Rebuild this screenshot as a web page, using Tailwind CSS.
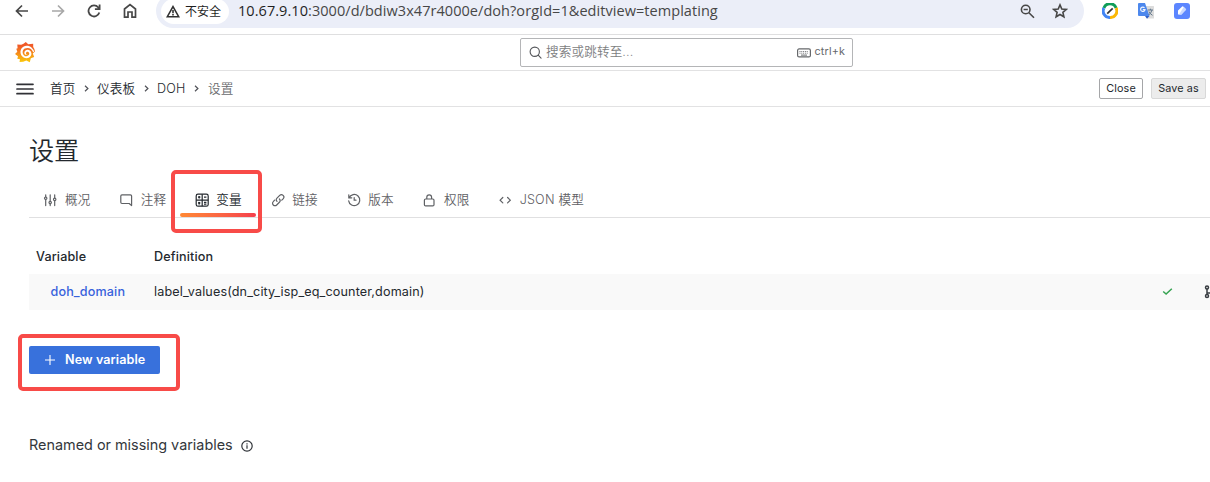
<!DOCTYPE html>
<html lang="zh">
<head>
<meta charset="utf-8">
<title>设置 - DOH - Grafana</title>
<script src="https://cdn.jsdelivr.net/npm/@tailwindcss/browser@4"></script>
</head>
<body class="w-[1210px] h-[482px] overflow-hidden bg-white text-[#24292e] text-[12.6px] font-['Inter','Noto_Sans_CJK_SC',sans-serif] tracking-[0.135px]">
<!-- browser toolbar -->
<div class="h-[35px] border-b border-[#dfdfe0] flex items-start">
  <div class="w-[156px] h-[22px] pl-[15px] flex items-center gap-[22px] text-[#474747]">
    <svg class="w-[14px] h-[14px] shrink-0" viewBox="0 0 14 14" fill="none" stroke="currentColor" stroke-width="1.7"><path d="M13 7H2M7 1.5L1.5 7L7 12.5"/></svg>
    <svg class="w-[14px] h-[14px] shrink-0 text-[#a8a8a8]" viewBox="0 0 14 14" fill="none" stroke="currentColor" stroke-width="1.7"><path d="M1 7h11M7 1.5L12.500 7L7 12.500"/></svg>
    <svg class="w-[14px] h-[14px] shrink-0" viewBox="0 0 14 14" fill="none" stroke="currentColor" stroke-width="1.8"><path d="M12.300 8.500A5.500 5.500 0 1 1 11.300 3.500L12.300 4.800M12.600 .5V5.200H7.900"/></svg>
    <svg class="w-[14px] h-[16px] shrink-0" viewBox="0 0 14 16" fill="none" stroke="currentColor" stroke-width="1.7"><path d="M1.500 14.200V6L7 1.700L12.500 6V14.200H9V9H5V14.200Z"/></svg>
  </div>
  <div class="w-[928px] h-[34px] -mt-[6px] rounded-full bg-[#ebeef8] flex items-center pl-[5px] pr-4">
    <div class="w-[68px] h-[25px] rounded-full bg-white flex items-center pl-[5px] gap-[5px] text-[12px] tracking-normal text-[#1f1f1f] shrink-0">
      <svg class="w-[14px] h-[13px] shrink-0" viewBox="0 0 14 13" fill="none" stroke="#303030" stroke-width="1.6"><path d="M7 1.600L12.700 11.700H1.300ZM7 5v3.200M7 9.100v1.400"/></svg>
      <span class="whitespace-nowrap pt-px">不安全</span>
    </div>
    <div class="ml-[9px] flex-1 whitespace-nowrap font-['Open_Sans','Noto_Sans',sans-serif] text-[14.5px] tracking-[0.055px] text-[#474747]"><span class="text-[#1f1f1f]">10.67.9.10</span>:3000/d/bdiw3x47r4000e/doh?orgId=1&amp;editview=templating</div>
    <svg class="w-[15px] h-[15px] mr-[17px]" viewBox="0 0 15 15" fill="none" stroke="#474747" stroke-width="1.600"><circle cx="5.700" cy="5.500" r="4.300"/><path d="M8.900 8.700L14 13.800M3.600 5.500h4.200"/></svg>
    <svg class="w-[16px] h-[16px]" viewBox="0 0 16 16" fill="none" stroke="#474747" stroke-width="1.600"><path d="M8 1.900L9.800 6L14.300 6.400L10.900 9.400L11.900 13.800L8 11.500L4.100 13.800L5.100 9.400L1.700 6.400L6.200 6Z"/></svg>
  </div>
  <div class="h-[22px] pl-[18px] flex items-center gap-[20px]">
    <svg class="w-4 h-4" viewBox="0 0 16 16" fill="none"><g stroke-width="3"><path stroke="#0f9d58" d="M1.900 5A6.500 6.500 0 0 1 14.100 5"/><path stroke="#fbb804" d="M14.100 5A6.500 6.500 0 0 1 8 14.500"/><path stroke="#4285f4" d="M8 14.500A6.500 6.500 0 0 1 1.900 5"/></g><path stroke="#333" stroke-width="1.700" d="M5.200 10.600L10.700 5.300"/></svg>
    <svg class="w-4 h-4" viewBox="0 0 16 16"><path fill="#dcdcdc" d="M6 3h9.500q.5 0 .5.500V15.500H9Z"/><path fill="#4d88ed" d="M1 0H7L11.500 13H1Q0 13 0 12V1Q0 0 1 0Z"/><path fill="#2f5fc7" d="M7 13h4.500L9 15.800Z"/><path fill="none" stroke="#eef4ff" stroke-width="1.200" d="M6.500 4.800A2.200 2.200 0 1 0 7 6.600H4.800"/><path fill="none" stroke="#60758a" d="M9.800 7H15M12.400 5.700V7M14 7Q13.200 10 10.700 12M11 8.500Q12 11 14.500 12.300"/></svg>
    <svg class="w-4 h-4" viewBox="0 0 16 16"><rect width="16" height="16" rx="3" fill="#5c86ff"/><path fill="#fff" d="M4 7.600L8.200 3.500Q8.700 3 9.200 3.500L11.800 6L7.500 11.500H4.500Q4 11.500 4 11Z"/><path fill="#cbd9ff" d="M9.700 4L12 6.200Q12.400 6.600 12 7L7.500 11.500H5Z"/></svg>
  </div>
</div>

<!-- application header -->
<header class="h-[36px] border-b border-[#e2e2e3] flex items-center pl-[15px]">
  <svg class="w-[20px] h-[21px] shrink-0" viewBox="0 0 20 21"><defs><linearGradient id="flame" x1="0" y1="0" x2="0" y2="1"><stop offset=".2" stop-color="#f05a28"/><stop offset="1" stop-color="#fbca0a"/></linearGradient></defs><path fill="url(#flame)" d="M10.800 0L13.200 2.200L18.200 1.800L18.200 5Q19.800 7 20 9.500L17.800 11.500L19.200 15L15.800 16.200L14.800 20.300L11.300 18.600L8.200 19.800L4.500 20L5 17.300L2.300 16.800L3 14.200L0 12L2.300 9.800L1.300 6.800L2.600 6.200L2.300 2.500L6.200 2.700L8.500 1.800Z"/><path fill="#fff" d="M19.200 9.500C17.500 5.200 14.500 3.600 11.500 3.700C7.400 4 5.300 7.200 5.500 10.500C5.700 13.800 8.500 16.300 11.600 16.200C14.900 16 16.700 13.500 16.400 11.200C16.100 9 14.300 7.500 12.300 7.700C10.300 7.900 9.100 9.600 9.400 11.300C9.700 12.700 11.200 13.400 12.500 12.700C11.300 12.800 10.900 12 11 11.200C11.200 9.900 12.300 9.500 13.200 9.900C14.400 10.400 14.600 11.900 13.800 13C12.500 14.600 9.900 14.500 8.600 12.900C7 10.900 7.500 7.800 9.800 6.600C12.700 5 16.800 6 18.200 10.200Z"/></svg>
  <div class="ml-[485px] w-[333px] h-[29px] border border-[#b4b5b7] rounded-[2px] flex items-center pl-[8px] pr-[7px] text-[#7d7e81]">
    <svg class="w-[13px] h-[13px] shrink-0" viewBox="0 0 14 14" fill="none" stroke="#55575b" stroke-width="1.200"><circle cx="6.200" cy="6.200" r="5"/><path d="M9.900 9.900L13 13" stroke-linecap="round"/></svg>
    <span class="ml-[4px] flex-1 font-[350]">搜索或跳转至...</span>
    <svg class="w-[14px] h-[10px] mr-[4px]" viewBox="0 0 14 10" fill="none" stroke="#66686b"><rect x=".6" y=".9" width="12.800" height="8" rx="1.500" stroke-width="1.200"/><path d="M2.500 3.500h9M2.500 5.200h9" stroke-dasharray="1 .8" stroke-width=".9"/><path d="M4 7.100h6"/></svg>
    <span class="text-[10.8px] text-[#66686b]">ctrl+k</span>
  </div>
</header>
<nav class="h-[36px] border-b border-[#e2e2e3] flex items-center pl-[16px] pr-[4px]">
  <svg class="w-[18px] h-[12px] shrink-0" viewBox="0 0 18 12" stroke="#303136" stroke-width="1.700" stroke-linecap="round"><path d="M1 1.300h16M1 6h16M1 10.700h16"/></svg>
  <div class="ml-[16px] pt-px flex items-center whitespace-nowrap font-[350]">
    <span class="w-[26px]">首页</span>
    <svg class="w-[5px] h-[7px] ml-[8px] mr-[8px]" viewBox="0 0 5 7" fill="none" stroke="#505258" stroke-width="1.200"><path d="M1 .8L3.900 3.500L1 6.200"/></svg>
    <span class="w-[39px]">仪表板</span>
    <svg class="w-[5px] h-[7px] ml-[8px] mr-[8px]" viewBox="0 0 5 7" fill="none" stroke="#505258" stroke-width="1.200"><path d="M1 .8L3.900 3.500L1 6.200"/></svg>
    <span class="w-[29px]">DOH</span>
    <svg class="w-[5px] h-[7px] ml-[8px] mr-[9px]" viewBox="0 0 5 7" fill="none" stroke="#505258" stroke-width="1.200"><path d="M1 .8L3.900 3.500L1 6.200"/></svg>
    <span class="text-[#696b6e]">设置</span>
  </div>
  <div class="ml-auto flex gap-[8px] text-[10.8px]">
    <button class="w-[44px] h-[21px] pt-px border border-[#a5a6a8] rounded-[2px] whitespace-nowrap">Close</button>
    <button class="w-[55px] h-[21px] pt-px border border-[#d8d8d8] bg-[#ececec] rounded-[2px] whitespace-nowrap">Save as</button>
  </div>
</nav>

<main class="pl-[29px]">
  <h1 class="pt-[25px] h-[75px] text-[25.2px] leading-[38px] tracking-[-0.2px] font-[350]">设置</h1>
  <!-- settings tabs -->
  <div class="relative h-[36px] border-b border-[#e0e0e1] flex text-[#5f6165] font-[350]">
    <div class="w-[75.7px] h-[36px] pl-[14.4px] flex items-center gap-[7.2px] whitespace-nowrap"><svg class="w-[14.4px] h-[14.4px] shrink-0" viewBox="0 0 24 24" fill="none" stroke="currentColor" stroke-width="2" stroke-linecap="round"><path d="M4.500 3v3.500M4.500 11v10M12 3v10M12 18v3M19.500 3v5.500M19.500 13v8"/><circle cx="4.500" cy="8.700" r="2"/><circle cx="12" cy="16" r="2"/><circle cx="19.500" cy="10.700" r="2"/></svg><span>概况</span></div>
    <div class="w-[75.700px] h-[36px] pl-[14.4px] flex items-center gap-[7.2px] whitespace-nowrap"><svg class="w-[14.4px] h-[14.4px] shrink-0" viewBox="0 0 24 24" fill="none" stroke="currentColor" stroke-width="2" stroke-linejoin="round"><path d="M5 3h14a2 2 0 0 1 2 2v16l-4-3.500H5a2 2 0 0 1-2-2V5a2 2 0 0 1 2-2Z"/></svg><span>注释</span></div>
    <div class="w-[76px] h-[36px] pl-[14.4px] flex items-center gap-[7.2px] whitespace-nowrap text-[#24292e]"><svg class="w-[14.4px] h-[14.4px] shrink-0" viewBox="0 0 24 24" fill="none" stroke="currentColor" stroke-width="2"><rect x="2" y="2" width="20" height="20" rx="3"/><path d="M12 2v20M2 12h20M5 7h4M7 5v4M15 7h4M5.500 15.500l3 3M8.500 15.500l-3 3M15 15.500h4M15 18.500h4"/></svg><span>变量</span></div>
    <div class="w-[76px] h-[36px] pl-[14.4px] flex items-center gap-[7.2px] whitespace-nowrap"><svg class="w-[14.4px] h-[14.4px] shrink-0" viewBox="0 0 24 24" fill="none" stroke="currentColor" stroke-width="2" stroke-linecap="round"><path d="M10 14a4 4 0 0 1 0-5.500L14.500 4a4 4 0 0 1 5.700 5.700L18 12M14 10a4 4 0 0 1 0 5.500L9.500 20a4 4 0 0 1-5.700-5.700L6 12"/></svg><span>链接</span></div>
    <div class="w-[75.6px] h-[36px] pl-[14.4px] flex items-center gap-[7.2px] whitespace-nowrap"><svg class="w-[14.4px] h-[14.4px] shrink-0" viewBox="0 0 24 24" fill="none" stroke="currentColor" stroke-width="2" stroke-linecap="round"><path d="M3 3v5h5M3.500 8A9.300 9.300 0 1 1 2.800 13M12 7.500V12h3"/></svg><span>版本</span></div>
    <div class="w-[75.7px] h-[36px] pl-[14.4px] flex items-center gap-[7.2px] whitespace-nowrap"><svg class="w-[14.4px] h-[14.4px] shrink-0" viewBox="0 0 24 24" fill="none" stroke="currentColor" stroke-width="2"><rect x="4" y="10" width="16" height="11.500" rx="2"/><path d="M8 10V7a4 4 0 0 1 8 0v3"/></svg><span>权限</span></div>
    <div class="h-[36px] pl-[14.4px] flex items-center gap-[7.2px] whitespace-nowrap"><svg class="w-[14.4px] h-[14.4px] shrink-0" viewBox="0 0 24 24" fill="none" stroke="currentColor" stroke-width="2" stroke-linecap="round"><path d="M8 7.500L3.500 12l4.500 4.500M16 7.500l4.500 4.500l-4.500 4.500"/></svg><span class="tracking-[0.2px]">JSON 模型</span></div>
    <div class="absolute left-[151px] top-[31px] w-[76px] h-[4px] rounded-[2px] bg-linear-to-r from-[#ff8833] to-[#f53e4c]"></div>
    <div class="absolute left-[142px] top-[-12px] w-[91px] h-[63px] rounded-[5px] border-4 border-[#f84b48]"></div>
  </div>

  <!-- variables table -->
  <div class="pt-[20px]">
    <div class="h-[36px] pt-[2px] pl-[7px] flex items-center font-medium"><span class="w-[118px]">Variable</span><span>Definition</span></div>
    <div class="h-[36px] bg-[#f9f9f9] flex items-center">
      <a class="w-[125px] pl-[21.500px] font-medium text-[#3862dc]">doh_domain</a>
      <span class="whitespace-nowrap">label_values(dn_city_isp_eq_counter,domain)</span>
      <svg class="ml-auto mr-[31px] w-[11px] h-[10px] shrink-0" viewBox="0 0 11 10" fill="none" stroke="#36a352" stroke-width="1.500"><path d="M1.200 4.500L4.100 7.100L9.800 1.700"/></svg>
      <div class="w-[6px] h-[16px] overflow-hidden shrink-0"><svg class="w-[13px] h-[16px] max-w-none" viewBox="0 0 13 16" fill="none" stroke="#393d42" stroke-width="1.500"><circle cx="3" cy="3.500" r="1.500"/><circle cx="3" cy="12" r="1.500"/><circle cx="10" cy="5" r="1.500"/><path d="M3 5v5.500M3 9h4q3 0 3-2.500"/></svg></div>
    </div>
  </div>
  <div class="relative mt-[36px]">
    <button class="w-[131px] h-[28px] bg-[#3871dc] rounded-[2px] text-white font-semibold tracking-[0.08px] flex items-center pl-[16px] whitespace-nowrap"><svg class="w-[10px] h-[10px] mr-[10px]" viewBox="0 0 10 10" stroke="#fff" stroke-width="1.100"><path d="M5 0v10M0 5h10"/></svg><span>New variable</span></button>
    <div class="absolute left-[-11px] top-[-12px] w-[162px] h-[57px] rounded-[5px] border-4 border-[#f84b48]"></div>
  </div>
  <div class="mt-[61px] flex items-center h-[20px] text-[14.4px] tracking-[0] text-[#33373c] whitespace-nowrap"><span class="w-[212px]">Renamed or missing variables</span><svg class="w-[12px] h-[12px] mt-[2px]" viewBox="0 0 12 12" fill="none" stroke="#303439" stroke-width="1.200"><circle cx="6" cy="6" r="5.200"/><path d="M6 5.300v3.500M6 3.200v1.200"/></svg></div>
</main>
</body>
</html>
